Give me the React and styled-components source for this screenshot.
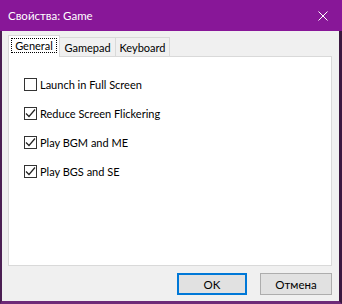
import React from 'react'
import styled, { createGlobalStyle } from 'styled-components'

const Global = createGlobalStyle`
    html, body {
        margin: 0;
        padding: 0;
        background: #000;
    }
    body {
        font-family: Lato, "Liberation Sans", sans-serif;
        font-size: 11px;
        color: #000;
    }
`

const Window = styled.div`
    width: 342px;
    height: 304px;
    box-sizing: border-box;
    display: flex;
    flex-direction: column;
    background: #f0f0f0;
    border-left: 2px solid #4b1f53;
    border-right: 3px solid #3a1840;
    border-bottom: 3px solid #6e2a78;
`

const TitleBar = styled.div`
    height: 31px;
    flex: none;
    background: #881798;
    color: #fff;
    display: flex;
    align-items: center;
    justify-content: space-between;
    padding: 0 7px 0 6px;
    margin-left: -2px;
    margin-right: -3px;
    font-size: 11.5px;
`

const Title = styled.span`
    padding-left: 2px;
`

const CloseIcon = styled.svg`
    width: 10px;
    height: 10px;
    margin-right: 7px;
`

const Body = styled.div`
    flex: 1;
    display: flex;
    flex-direction: column;
    padding: 4px 7px 6px 6px;
`

const TabRow = styled.div`
    display: flex;
    align-items: flex-end;
    height: 22px;
    margin-bottom: -1px;
    position: relative;
    z-index: 1;
`

const Tab = styled.div`
    box-sizing: border-box;
    display: flex;
    align-items: center;
    justify-content: center;
    white-space: nowrap;
    border: 1px solid #d9d9d9;
    border-bottom: ${p => (p.$active ? 'none' : '1px solid #d9d9d9')};
    border-left: ${p => (p.$first || p.$active ? '1px solid #d9d9d9' : 'none')};
    background: ${p => (p.$active ? '#fff' : '#f0f0f0')};
    height: ${p => (p.$active ? '22px' : '20px')};
    width: ${p => p.$w}px;
    padding-bottom: ${p => (p.$active ? '2px' : '0')};
`

const Focus = styled.span`
    outline: 1px dotted #000;
    outline-offset: 0;
    padding: 0 3px;
    line-height: 13px;
`

const Panel = styled.div`
    height: 210px;
    box-sizing: border-box;
    background: #fff;
    border: 1px solid #d9d9d9;
    padding: 21px 15px;
    display: flex;
    flex-direction: column;
    gap: 16px;
`

const Row = styled.label`
    display: flex;
    align-items: center;
    gap: 3px;
    height: 13px;
    line-height: 13px;
`

const Box = styled.span`
    box-sizing: border-box;
    width: 13px;
    height: 13px;
    border: 1px solid #333;
    background: #fff;
    display: flex;
    align-items: center;
    justify-content: center;
`

const Buttons = styled.div`
    display: flex;
    justify-content: flex-end;
    gap: 13px;
    margin-top: 7px;
`

const Button = styled.button`
    box-sizing: border-box;
    width: ${p => p.$w}px;
    height: 22px;
    font-family: inherit;
    font-size: 11.5px;
    color: #000;
    background: #e1e1e1;
    border: ${p => (p.$default ? '2px solid #0078d7' : '1px solid #adadad')};
    padding: 0;
`

const Check = ({ checked, children }) => (
    <Row>
        <Box>
            {checked && (
                <svg width="11" height="11" viewBox="0 0 11 11">
                    <polyline points="1,5.5 4,8.5 10,1.5" fill="none" stroke="#222" strokeWidth="1.2" />
                </svg>
            )}
        </Box>
        {children}
    </Row>
)

const App = () => {
    return (
        <Window>
            <Global />
            <TitleBar>
                <Title>Свойства: Game</Title>
                <CloseIcon viewBox="0 0 10 10">
                    <path d="M0.5 0.5 L9.5 9.5 M9.5 0.5 L0.5 9.5" stroke="#fff" strokeWidth="1" />
                </CloseIcon>
            </TitleBar>
            <Body>
                <TabRow>
                    <Tab $active $first $w={52}><Focus>General</Focus></Tab>
                    <Tab $w={56}>Gamepad</Tab>
                    <Tab $w={54}>Keyboard</Tab>
                </TabRow>
                <Panel>
                    <Check>Launch in Full Screen</Check>
                    <Check checked>Reduce Screen Flickering</Check>
                    <Check checked>Play BGM and ME</Check>
                    <Check checked>Play BGS and SE</Check>
                </Panel>
                <Buttons>
                    <Button $default $w={70}>OK</Button>
                    <Button $w={72}>Отмена</Button>
                </Buttons>
            </Body>
        </Window>
    )
}

export default App
